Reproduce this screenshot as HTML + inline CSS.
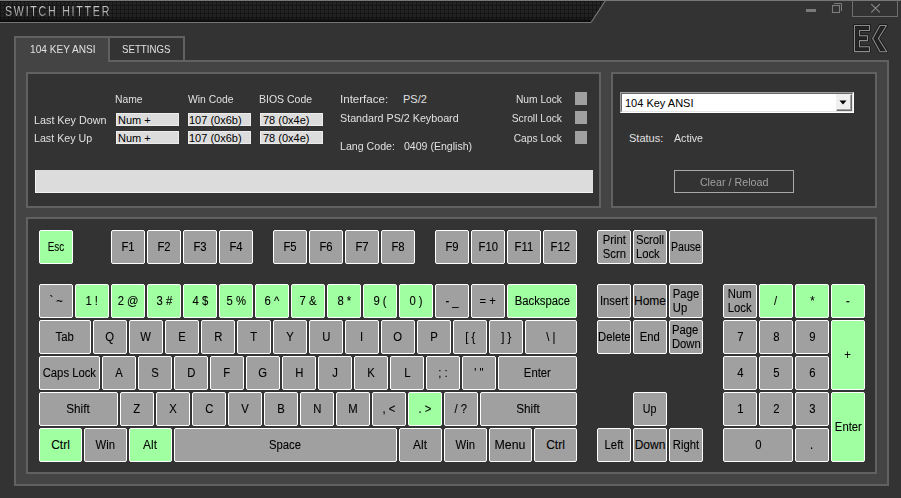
<!DOCTYPE html>
<html><head><meta charset="utf-8">
<style>
*{margin:0;padding:0;box-sizing:border-box}
html,body{width:901px;height:498px;overflow:hidden;background:#333;font-family:"Liberation Sans",sans-serif;font-size:11px;color:#e0e0e0}
.a{position:absolute}
.t{position:absolute;white-space:nowrap;line-height:13px;height:13px}
.bx{position:absolute;border:2px solid #616161}
.k{position:absolute;display:flex;align-items:center;justify-content:center;background:#a0a0a0;border:1px solid #fff;border-radius:2px;color:#000;text-align:center;font-size:12px;-webkit-text-stroke:0.1px #000;white-space:nowrap;overflow:hidden}
.k.gr{background:#a0ffa0}
.k span{display:inline-block;flex:none;transform:scaleX(0.94)}
.k.two span{display:inline-block;line-height:14.5px;vertical-align:middle;text-align:left}
.fld{position:absolute;background:#dcdcdc;border:1px solid #ececec;height:13px;color:#000;line-height:13px;white-space:nowrap;text-indent:-1px}
.sq{position:absolute;width:12px;height:13px;background:#a0a0a0}
</style></head><body>
<!-- title bar -->
<svg class="a" style="left:0;top:0" width="901" height="24" viewBox="0 0 901 24">
<defs>
<pattern id="grid" x="0" y="2" width="4" height="4" patternUnits="userSpaceOnUse">
<rect width="4" height="4" fill="#191919"/><rect x="1" y="0" width="3" height="3" fill="#282828"/>
</pattern>
<linearGradient id="fade" x1="0" y1="0" x2="0" y2="1">
<stop offset="0" stop-color="#000" stop-opacity="0.1"/><stop offset="0.75" stop-color="#000" stop-opacity="0.15"/><stop offset="1" stop-color="#000" stop-opacity="0.7"/>
</linearGradient>
</defs>
<rect x="0" y="0" width="901" height="1" fill="#777"/>
<polygon points="0,1 605,1 591,22 0,22" fill="url(#grid)"/>
<polygon points="0,1 605,1 591,22 0,22" fill="url(#fade)"/>
<rect x="0" y="22" width="591" height="1" fill="#777"/>
<line x1="591" y1="22.5" x2="605.5" y2="0.5" stroke="#777" stroke-width="1.2"/>
</svg>
<div class="t" style="left:5px;top:3px;font-size:14px;line-height:16px;height:16px;letter-spacing:2.3px;color:#b0b0b0;transform:scaleX(0.76);transform-origin:0 0;-webkit-background-clip:text;background-clip:text;background-image:linear-gradient(#c4c4c4,#c4c4c4 40%,#8c8c8c 85%);-webkit-text-fill-color:transparent">SWITCH HITTER</div>
<!-- window controls -->
<div class="a" style="left:806px;top:9px;width:10px;height:3px;background:#7a7a7a"></div>
<svg class="a" style="left:826px;top:0" width="24" height="18" viewBox="826 0 24 18">
<path d="M834,3.5 H841.5 V11" fill="none" stroke="#7c7c7c" stroke-width="1"/>
<rect x="832.5" y="5.5" width="7" height="7" fill="none" stroke="#7c7c7c" stroke-width="1.1"/>
</svg>
<div class="a" style="left:852px;top:-1px;width:46px;height:18px;border:1px solid #6e6e6e"></div>
<svg class="a" style="left:870px;top:3px" width="12" height="11" viewBox="0 0 12 11">
<path d="M1.3,1.2 L9.8,9.3 M9.8,1.2 L1.3,9.3" stroke="#8a8a8a" stroke-width="1.1"/>
</svg>
<!-- logo -->
<svg class="a" style="left:850px;top:22px" width="42" height="34" viewBox="850 22 42 34">
<g stroke-linejoin="round">
<polygon points="854.5,25.5 869.5,25.5 869.5,30.5 859.5,30.5 859.5,35.8 867.5,35.8 867.5,40.6 859.5,40.6 859.5,46.8 869.5,46.8 869.5,51.6 854.5,51.6" fill="#252525" stroke="#1c1c1c" stroke-width="3"/>
<polygon points="880,25.5 886.5,25.5 878.4,38.5 886.8,51.8 880,51.8 872.7,38.5" fill="#252525" stroke="#1c1c1c" stroke-width="3"/>
<polygon points="854.5,25.5 869.5,25.5 869.5,30.5 859.5,30.5 859.5,35.8 867.5,35.8 867.5,40.6 859.5,40.6 859.5,46.8 869.5,46.8 869.5,51.6 854.5,51.6" fill="none" stroke="#8e8e8e" stroke-width="1.1"/>
<polygon points="880,25.5 886.5,25.5 878.4,38.5 886.8,51.8 880,51.8 872.7,38.5" fill="none" stroke="#8e8e8e" stroke-width="1.1"/>
</g>
</svg>
<!-- container & tabs -->
<div class="bx" style="left:14px;top:60px;width:875px;height:426px;background:#444"></div>
<div class="a" style="left:14px;top:36px;width:96px;height:26px;border-left:2px solid #616161;border-top:2px solid #616161;background:#444"></div>
<div class="bx" style="left:108px;top:36px;width:77px;height:26px;background:#333"></div>
<div class="t" style="left:30px;top:43px;transform:scaleX(0.92);transform-origin:0 0">104 KEY ANSI</div>
<div class="t" style="left:122px;top:43px;transform:scaleX(0.88);transform-origin:0 0">SETTINGS</div>
<!-- info panel -->
<div class="bx" style="left:26px;top:72px;width:575px;height:136px;background:#333"></div>
<div class="t" style="left:115px;top:93px;transform:scaleX(0.94);transform-origin:0 0">Name</div>
<div class="t" style="left:188px;top:93px;transform:scaleX(0.94);transform-origin:0 0">Win Code</div>
<div class="t" style="left:259px;top:93px;transform:scaleX(0.955);transform-origin:0 0">BIOS Code</div>
<div class="t" style="left:34px;top:114px;transform:scaleX(0.98);transform-origin:0 0">Last Key Down</div>
<div class="t" style="left:34px;top:132px;transform:scaleX(0.97);transform-origin:0 0">Last Key Up</div>
<div class="fld" style="left:116px;top:113px;width:63px;padding-left:2px">Num +</div>
<div class="fld" style="left:188px;top:113px;width:63px;padding-left:1px">107 (0x6b)</div>
<div class="fld" style="left:260px;top:113px;width:63px;padding-left:3px">78 (0x4e)</div>
<div class="fld" style="left:116px;top:131px;width:63px;padding-left:2px">Num +</div>
<div class="fld" style="left:188px;top:131px;width:63px;padding-left:1px">107 (0x6b)</div>
<div class="fld" style="left:260px;top:131px;width:63px;padding-left:3px">78 (0x4e)</div>
<div class="t" style="left:340px;top:93px;transform:scaleX(1.05);transform-origin:0 0">Interface:</div>
<div class="t" style="left:403px;top:93px">PS/2</div>
<div class="t" style="left:340px;top:112px;transform:scaleX(0.975);transform-origin:0 0">Standard PS/2 Keyboard</div>
<div class="t" style="left:340px;top:140px;transform:scaleX(0.965);transform-origin:0 0">Lang Code:</div>
<div class="t" style="left:404px;top:140px;transform:scaleX(0.96);transform-origin:0 0">0409 (English)</div>
<div class="t" style="left:462px;top:93px;width:100px;text-align:right;transform:scaleX(0.93);transform-origin:100% 0">Num Lock</div>
<div class="t" style="left:462px;top:112px;width:100px;text-align:right;transform:scaleX(0.935);transform-origin:100% 0">Scroll Lock</div>
<div class="t" style="left:462px;top:132px;width:100px;text-align:right;transform:scaleX(0.93);transform-origin:100% 0">Caps Lock</div>
<div class="sq" style="left:575px;top:92px"></div>
<div class="sq" style="left:575px;top:111px"></div>
<div class="sq" style="left:575px;top:131px"></div>
<div class="a" style="left:35px;top:170px;width:558px;height:23px;background:#dcdcdc;border-left:1px solid #f4f4f4;border-bottom:1px solid #f4f4f4"></div>
<!-- right panel -->
<div class="bx" style="left:611px;top:72px;width:266px;height:136px;background:#333"></div>
<div class="a" style="left:620px;top:92px;width:234px;height:21px;background:#fff;border-top:1px solid #a0a0a0;border-left:1px solid #a0a0a0;border-right:1px solid #fff;border-bottom:1px solid #fff">
  <div class="a" style="left:0;top:0;right:0;bottom:0;border-top:1px solid #696969;border-left:1px solid #696969;border-right:1px solid #e3e3e3;border-bottom:1px solid #e3e3e3"></div>
</div>
<div class="t" style="left:625px;top:97px;color:#000">104 Key ANSI</div>
<div class="a" style="left:836px;top:94px;width:16px;height:17px;background:#f0f0f0;border-right:1px solid #696969;border-bottom:1px solid #696969;border-top:1px solid #f0f0f0;border-left:1px solid #f0f0f0;box-shadow:inset -1px -1px 0 #a0a0a0">
</div>
<svg class="a" style="left:838px;top:100px" width="10" height="6" viewBox="0 0 10 6"><polygon points="1.5,0.5 8.5,0.5 5,4.5" fill="#000"/></svg>
<div class="t" style="left:629px;top:132px">Status:</div>
<div class="t" style="left:674px;top:132px;transform:scaleX(0.97);transform-origin:0 0">Active</div>
<div class="a" style="left:674px;top:170px;width:120px;height:23px;border:1px solid #a8a8a8;color:#a0a0a0;text-align:center;line-height:23px"><span style="display:inline-block;transform:scaleX(0.975)">Clear / Reload</span></div>
<!-- keyboard panel -->
<div class="bx" style="left:26px;top:217px;width:851px;height:257px;background:#333"></div>
<div class="k gr" style="left:39px;top:230px;width:34px;height:34px;line-height:32px"><span style="transform:scaleX(0.82)">Esc</span></div>
<div class="k" style="left:111px;top:230px;width:34px;height:34px;line-height:32px"><span>F1</span></div>
<div class="k" style="left:147px;top:230px;width:34px;height:34px;line-height:32px"><span>F2</span></div>
<div class="k" style="left:183px;top:230px;width:34px;height:34px;line-height:32px"><span>F3</span></div>
<div class="k" style="left:219px;top:230px;width:34px;height:34px;line-height:32px"><span>F4</span></div>
<div class="k" style="left:273px;top:230px;width:34px;height:34px;line-height:32px"><span>F5</span></div>
<div class="k" style="left:309px;top:230px;width:34px;height:34px;line-height:32px"><span>F6</span></div>
<div class="k" style="left:345px;top:230px;width:34px;height:34px;line-height:32px"><span>F7</span></div>
<div class="k" style="left:381px;top:230px;width:34px;height:34px;line-height:32px"><span>F8</span></div>
<div class="k" style="left:435px;top:230px;width:34px;height:34px;line-height:32px"><span>F9</span></div>
<div class="k" style="left:471px;top:230px;width:34px;height:34px;line-height:32px"><span>F10</span></div>
<div class="k" style="left:507px;top:230px;width:34px;height:34px;line-height:32px"><span>F11</span></div>
<div class="k" style="left:543px;top:230px;width:34px;height:34px;line-height:32px"><span>F12</span></div>
<div class="k two" style="left:597px;top:230px;width:34px;height:34px;line-height:32px"><span>Print<br>Scrn</span></div>
<div class="k two" style="left:633px;top:230px;width:34px;height:34px;line-height:32px"><span>Scroll<br>Lock</span></div>
<div class="k" style="left:669px;top:230px;width:34px;height:34px;line-height:32px"><span style="transform:scaleX(0.88)">Pause</span></div>
<div class="k" style="left:39px;top:284px;width:34px;height:34px;line-height:32px"><span>` ~</span></div>
<div class="k gr" style="left:75px;top:284px;width:34px;height:34px;line-height:32px"><span>1 !</span></div>
<div class="k gr" style="left:111px;top:284px;width:34px;height:34px;line-height:32px"><span>2 @</span></div>
<div class="k gr" style="left:147px;top:284px;width:34px;height:34px;line-height:32px"><span>3 #</span></div>
<div class="k gr" style="left:183px;top:284px;width:34px;height:34px;line-height:32px"><span>4 $</span></div>
<div class="k gr" style="left:219px;top:284px;width:34px;height:34px;line-height:32px"><span>5 %</span></div>
<div class="k gr" style="left:255px;top:284px;width:34px;height:34px;line-height:32px"><span>6 ^</span></div>
<div class="k gr" style="left:291px;top:284px;width:34px;height:34px;line-height:32px"><span>7 &amp;</span></div>
<div class="k gr" style="left:327px;top:284px;width:34px;height:34px;line-height:32px"><span>8 *</span></div>
<div class="k gr" style="left:363px;top:284px;width:34px;height:34px;line-height:32px"><span>9 (</span></div>
<div class="k gr" style="left:399px;top:284px;width:34px;height:34px;line-height:32px"><span>0 )</span></div>
<div class="k" style="left:435px;top:284px;width:34px;height:34px;line-height:32px"><span>- _</span></div>
<div class="k" style="left:471px;top:284px;width:34px;height:34px;line-height:32px"><span>= +</span></div>
<div class="k gr" style="left:507px;top:284px;width:70px;height:34px;line-height:32px"><span>Backspace</span></div>
<div class="k" style="left:597px;top:284px;width:34px;height:34px;line-height:32px"><span>Insert</span></div>
<div class="k" style="left:633px;top:284px;width:34px;height:34px;line-height:32px"><span style="transform:scaleX(1.0)">Home</span></div>
<div class="k two" style="left:669px;top:284px;width:34px;height:34px;line-height:32px"><span>Page<br>Up</span></div>
<div class="k two" style="left:723px;top:284px;width:34px;height:34px;line-height:32px"><span>Num<br>Lock</span></div>
<div class="k gr" style="left:759px;top:284px;width:34px;height:34px;line-height:32px"><span>/</span></div>
<div class="k gr" style="left:795px;top:284px;width:34px;height:34px;line-height:32px"><span>*</span></div>
<div class="k gr" style="left:831px;top:284px;width:34px;height:34px;line-height:32px"><span>-</span></div>
<div class="k" style="left:39px;top:320px;width:52px;height:34px;line-height:32px"><span>Tab</span></div>
<div class="k" style="left:93px;top:320px;width:34px;height:34px;line-height:32px"><span>Q</span></div>
<div class="k" style="left:129px;top:320px;width:34px;height:34px;line-height:32px"><span>W</span></div>
<div class="k" style="left:165px;top:320px;width:34px;height:34px;line-height:32px"><span>E</span></div>
<div class="k" style="left:201px;top:320px;width:34px;height:34px;line-height:32px"><span>R</span></div>
<div class="k" style="left:237px;top:320px;width:34px;height:34px;line-height:32px"><span>T</span></div>
<div class="k" style="left:273px;top:320px;width:34px;height:34px;line-height:32px"><span>Y</span></div>
<div class="k" style="left:309px;top:320px;width:34px;height:34px;line-height:32px"><span>U</span></div>
<div class="k" style="left:345px;top:320px;width:34px;height:34px;line-height:32px"><span>I</span></div>
<div class="k" style="left:381px;top:320px;width:34px;height:34px;line-height:32px"><span>O</span></div>
<div class="k" style="left:417px;top:320px;width:34px;height:34px;line-height:32px"><span>P</span></div>
<div class="k" style="left:453px;top:320px;width:34px;height:34px;line-height:32px"><span>[ {</span></div>
<div class="k" style="left:489px;top:320px;width:34px;height:34px;line-height:32px"><span>] }</span></div>
<div class="k" style="left:525px;top:320px;width:52px;height:34px;line-height:32px"><span>\ |</span></div>
<div class="k" style="left:597px;top:320px;width:34px;height:34px;line-height:32px"><span>Delete</span></div>
<div class="k" style="left:633px;top:320px;width:34px;height:34px;line-height:32px"><span>End</span></div>
<div class="k two" style="left:669px;top:320px;width:34px;height:34px;line-height:32px"><span>Page<br>Down</span></div>
<div class="k" style="left:723px;top:320px;width:34px;height:34px;line-height:32px"><span>7</span></div>
<div class="k" style="left:759px;top:320px;width:34px;height:34px;line-height:32px"><span>8</span></div>
<div class="k" style="left:795px;top:320px;width:34px;height:34px;line-height:32px"><span>9</span></div>
<div class="k gr" style="left:831px;top:320px;width:34px;height:70px;line-height:68px"><span>+</span></div>
<div class="k" style="left:39px;top:356px;width:61px;height:34px;line-height:32px"><span>Caps Lock</span></div>
<div class="k" style="left:102px;top:356px;width:34px;height:34px;line-height:32px"><span>A</span></div>
<div class="k" style="left:138px;top:356px;width:34px;height:34px;line-height:32px"><span>S</span></div>
<div class="k" style="left:174px;top:356px;width:34px;height:34px;line-height:32px"><span>D</span></div>
<div class="k" style="left:210px;top:356px;width:34px;height:34px;line-height:32px"><span>F</span></div>
<div class="k" style="left:246px;top:356px;width:34px;height:34px;line-height:32px"><span>G</span></div>
<div class="k" style="left:282px;top:356px;width:34px;height:34px;line-height:32px"><span>H</span></div>
<div class="k" style="left:318px;top:356px;width:34px;height:34px;line-height:32px"><span>J</span></div>
<div class="k" style="left:354px;top:356px;width:34px;height:34px;line-height:32px"><span>K</span></div>
<div class="k" style="left:390px;top:356px;width:34px;height:34px;line-height:32px"><span>L</span></div>
<div class="k" style="left:426px;top:356px;width:34px;height:34px;line-height:32px"><span>; :</span></div>
<div class="k" style="left:462px;top:356px;width:34px;height:34px;line-height:32px"><span>' "</span></div>
<div class="k" style="left:498px;top:356px;width:79px;height:34px;line-height:32px"><span>Enter</span></div>
<div class="k" style="left:723px;top:356px;width:34px;height:34px;line-height:32px"><span>4</span></div>
<div class="k" style="left:759px;top:356px;width:34px;height:34px;line-height:32px"><span>5</span></div>
<div class="k" style="left:795px;top:356px;width:34px;height:34px;line-height:32px"><span>6</span></div>
<div class="k" style="left:39px;top:392px;width:79px;height:34px;line-height:32px"><span style="transform:scaleX(0.98)">Shift</span></div>
<div class="k" style="left:120px;top:392px;width:34px;height:34px;line-height:32px"><span>Z</span></div>
<div class="k" style="left:156px;top:392px;width:34px;height:34px;line-height:32px"><span>X</span></div>
<div class="k" style="left:192px;top:392px;width:34px;height:34px;line-height:32px"><span>C</span></div>
<div class="k" style="left:228px;top:392px;width:34px;height:34px;line-height:32px"><span>V</span></div>
<div class="k" style="left:264px;top:392px;width:34px;height:34px;line-height:32px"><span>B</span></div>
<div class="k" style="left:300px;top:392px;width:34px;height:34px;line-height:32px"><span>N</span></div>
<div class="k" style="left:336px;top:392px;width:34px;height:34px;line-height:32px"><span>M</span></div>
<div class="k" style="left:372px;top:392px;width:34px;height:34px;line-height:32px"><span>, &lt;</span></div>
<div class="k gr" style="left:408px;top:392px;width:34px;height:34px;line-height:32px"><span>. &gt;</span></div>
<div class="k" style="left:444px;top:392px;width:34px;height:34px;line-height:32px"><span>/ ?</span></div>
<div class="k" style="left:480px;top:392px;width:97px;height:34px;line-height:32px"><span style="transform:scaleX(0.98)">Shift</span></div>
<div class="k" style="left:633px;top:392px;width:34px;height:34px;line-height:32px"><span style="transform:scaleX(0.89)">Up</span></div>
<div class="k" style="left:723px;top:392px;width:34px;height:34px;line-height:32px"><span>1</span></div>
<div class="k" style="left:759px;top:392px;width:34px;height:34px;line-height:32px"><span>2</span></div>
<div class="k" style="left:795px;top:392px;width:34px;height:34px;line-height:32px"><span>3</span></div>
<div class="k gr" style="left:831px;top:392px;width:34px;height:70px;line-height:68px"><span>Enter</span></div>
<div class="k gr" style="left:39px;top:428px;width:43px;height:34px;line-height:32px"><span style="transform:scaleX(1.0)">Ctrl</span></div>
<div class="k" style="left:84px;top:428px;width:43px;height:34px;line-height:32px"><span>Win</span></div>
<div class="k gr" style="left:129px;top:428px;width:43px;height:34px;line-height:32px"><span style="transform:scaleX(0.99)">Alt</span></div>
<div class="k" style="left:174px;top:428px;width:223px;height:34px;line-height:32px"><span>Space</span></div>
<div class="k" style="left:399px;top:428px;width:43px;height:34px;line-height:32px"><span style="transform:scaleX(0.99)">Alt</span></div>
<div class="k" style="left:444px;top:428px;width:43px;height:34px;line-height:32px"><span>Win</span></div>
<div class="k" style="left:489px;top:428px;width:43px;height:34px;line-height:32px"><span style="transform:scaleX(1.03)">Menu</span></div>
<div class="k" style="left:534px;top:428px;width:43px;height:34px;line-height:32px"><span style="transform:scaleX(1.0)">Ctrl</span></div>
<div class="k" style="left:597px;top:428px;width:34px;height:34px;line-height:32px"><span>Left</span></div>
<div class="k" style="left:633px;top:428px;width:34px;height:34px;line-height:32px"><span style="transform:scaleX(1.0)">Down</span></div>
<div class="k" style="left:669px;top:428px;width:34px;height:34px;line-height:32px"><span>Right</span></div>
<div class="k" style="left:723px;top:428px;width:70px;height:34px;line-height:32px"><span>0</span></div>
<div class="k" style="left:795px;top:428px;width:34px;height:34px;line-height:32px"><span>.</span></div>
</body></html>
